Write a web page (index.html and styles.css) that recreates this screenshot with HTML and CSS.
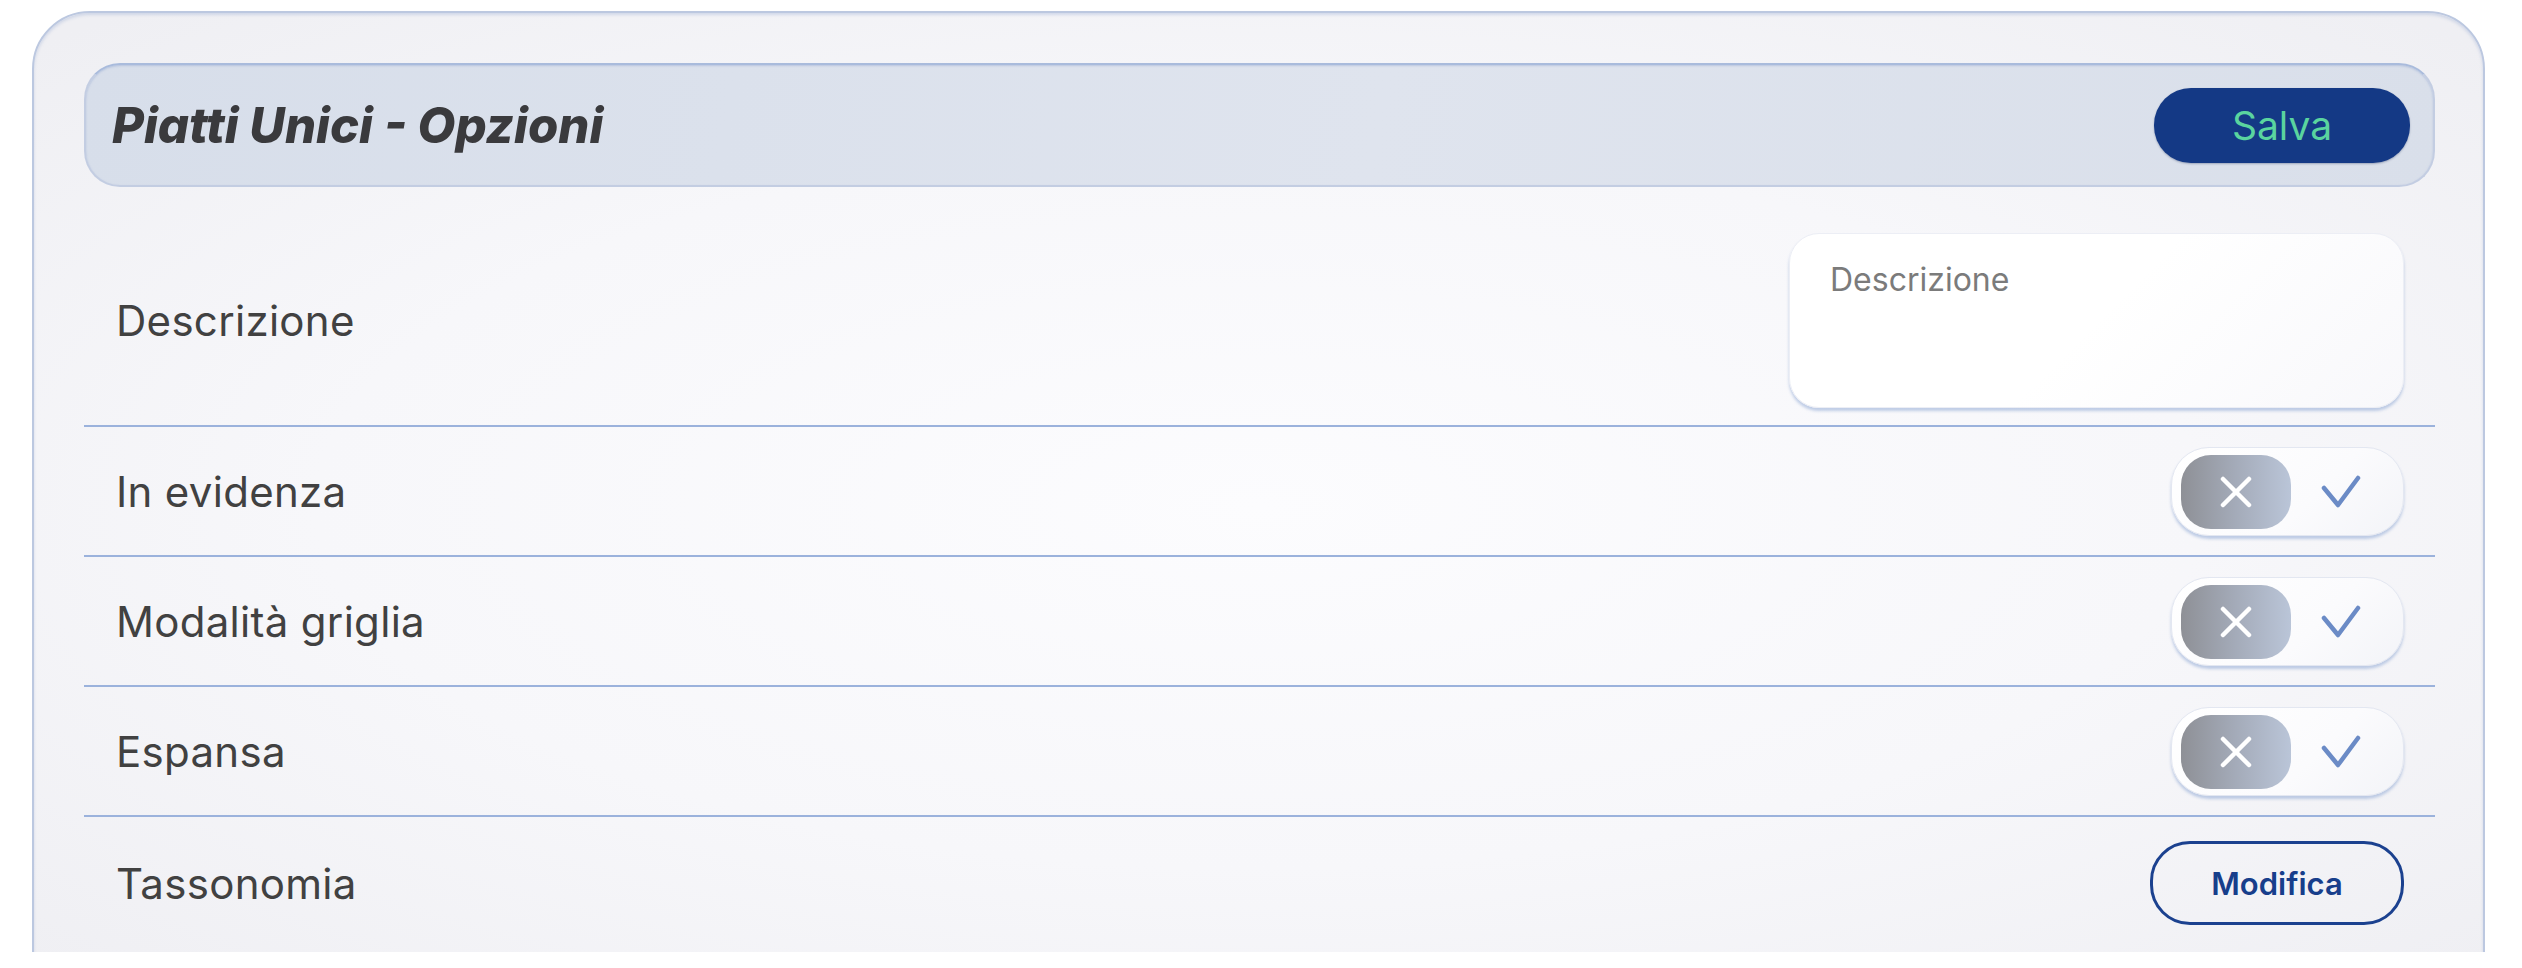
FILE: index.html
```html
<!DOCTYPE html>
<html lang="it">
<head>
<meta charset="utf-8">
<title>Piatti Unici - Opzioni</title>
<link rel="stylesheet" href="styles.css">
</head>
<body>
<div class="viewport">
  <section class="card">
    <header class="card-header">
      <h1 class="title">Piatti Unici - Opzioni</h1>
      <button class="btn-save" type="button">Salva</button>
    </header>
    <div class="rows">
      <div class="row row-desc">
        <span class="label">Descrizione</span>
        <textarea class="desc-input" placeholder="Descrizione"></textarea>
      </div>
      <div class="row">
        <span class="label">In evidenza</span>
        <div class="toggle">
          <span class="knob"><svg viewBox="0 0 34 32" width="34" height="32"><path d="M4 3 L30 29 M30 3 L4 29" stroke="#fff" stroke-width="4.5" stroke-linecap="round" fill="none"/></svg></span>
          <span class="check"><svg viewBox="0 0 40 34" width="40" height="34"><path d="M3 13 L17 30 L37 3" stroke="#6b8bc6" stroke-width="4.5" stroke-linecap="round" stroke-linejoin="round" fill="none"/></svg></span>
        </div>
      </div>
      <div class="row">
        <span class="label">Modalità griglia</span>
        <div class="toggle">
          <span class="knob"><svg viewBox="0 0 34 32" width="34" height="32"><path d="M4 3 L30 29 M30 3 L4 29" stroke="#fff" stroke-width="4.5" stroke-linecap="round" fill="none"/></svg></span>
          <span class="check"><svg viewBox="0 0 40 34" width="40" height="34"><path d="M3 13 L17 30 L37 3" stroke="#6b8bc6" stroke-width="4.5" stroke-linecap="round" stroke-linejoin="round" fill="none"/></svg></span>
        </div>
      </div>
      <div class="row">
        <span class="label">Espansa</span>
        <div class="toggle">
          <span class="knob"><svg viewBox="0 0 34 32" width="34" height="32"><path d="M4 3 L30 29 M30 3 L4 29" stroke="#fff" stroke-width="4.5" stroke-linecap="round" fill="none"/></svg></span>
          <span class="check"><svg viewBox="0 0 40 34" width="40" height="34"><path d="M3 13 L17 30 L37 3" stroke="#6b8bc6" stroke-width="4.5" stroke-linecap="round" stroke-linejoin="round" fill="none"/></svg></span>
        </div>
      </div>
      <div class="row row-last">
        <span class="label">Tassonomia</span>
        <button class="btn-outline" type="button">Modifica</button>
      </div>
    </div>
  </section>
</div>
</body>
</html>
```

FILE: styles.css
```css
* { box-sizing: border-box; }

html, body {
  margin: 0;
  padding: 0;
  background: #ffffff;
}

body {
  font-family: Inter, "Noto Sans", "DejaVu Sans", sans-serif;
  color: #404040;
}

.viewport {
  height: 952px;
  overflow: hidden;
  padding: 11px 37px 0 32px;
}

.card {
  width: 2453px;
  height: 1100px;
  border: 2px solid #bcc8e0;
  border-radius: 58px;
  padding: 50px 48px 0 50px;
  background:
    radial-gradient(ellipse 70% 60% at 50% 45%, #fcfcfe 0%, #f7f7fa 55%, #efeff3 100%);
  box-shadow: inset 0 2px 3px rgba(150, 170, 210, 0.35);
}

.card-header {
  height: 124px;
  display: flex;
  align-items: center;
  justify-content: space-between;
  padding: 0 23px 0 26px;
  border: 2px solid #c3cde2;
  border-top-color: #a9bbdc;
  border-radius: 36px;
  background: linear-gradient(100deg, #d7deea 0%, #dfe4ee 55%, #d9dfea 100%);
  box-shadow: inset 0 1px 2px rgba(120, 145, 200, 0.35);
}

.title {
  margin: 0;
  font-family: Inter, "Noto Sans", sans-serif;
  font-size: 49px;
  font-weight: 800;
  font-style: italic;
  color: #3a3a3d;
  letter-spacing: 0;
}

.btn-save {
  width: 256px;
  height: 75px;
  border: none;
  border-radius: 37px;
  background: #143985;
  color: #5ad49f;
  font-family: Inter, "Noto Sans", sans-serif;
  font-size: 39px;
  font-weight: 400;
  padding: 0;
  cursor: pointer;
  box-shadow: 0 1px 2px rgba(10, 30, 80, 0.3);
}

.rows {
  margin-top: 26px;
}

.row {
  display: flex;
  align-items: center;
  justify-content: space-between;
  padding: 20px 31px 19px 32px;
  border-bottom: 2px solid #9bb2dc;
}

.row-desc {
  padding-bottom: 17px;
}

.row-last {
  border-bottom: none;
  padding-top: 24px;
}

.label {
  font-size: 42px;
  font-weight: 400;
  color: #414141;
  letter-spacing: 0.3px;
}

.desc-input {
  width: 615px;
  height: 175px;
  border: 1px solid #eceef5;
  border-radius: 30px;
  padding: 26px 40px;
  background: linear-gradient(135deg, #ffffff 0%, #ffffff 50%, #f8f8fb 100%);
  font-family: Inter, "Noto Sans", sans-serif;
  font-size: 32px;
  color: #555;
  outline: none;
  resize: none;
  box-shadow: 0 3px 3px rgba(120, 150, 205, 0.45);
}

.desc-input::placeholder {
  color: #7b7b7b;
}

.toggle {
  width: 233px;
  height: 89px;
  display: flex;
  align-items: center;
  padding-left: 9px;
  border: 1px solid #e3e7f1;
  border-radius: 38px;
  background: linear-gradient(135deg, #ffffff 0%, #fbfbfd 60%, #f3f4f8 100%);
  box-shadow: 0 3px 3px rgba(120, 150, 205, 0.45);
}

.knob {
  width: 110px;
  height: 74px;
  border-radius: 30px;
  display: flex;
  align-items: center;
  justify-content: center;
  background: linear-gradient(90deg, #8e9096 0%, #a4abb9 50%, #bac5d8 100%);
}

.check {
  flex: 1;
  display: flex;
  align-items: center;
  justify-content: center;
  padding-right: 12px;
}

.btn-outline {
  width: 254px;
  height: 84px;
  border: 3px solid #1b418f;
  border-radius: 40px;
  background: transparent;
  color: #173e8b;
  font-family: Inter, "Noto Sans", sans-serif;
  font-size: 31px;
  font-weight: 600;
  padding: 0;
  cursor: pointer;
}
```
